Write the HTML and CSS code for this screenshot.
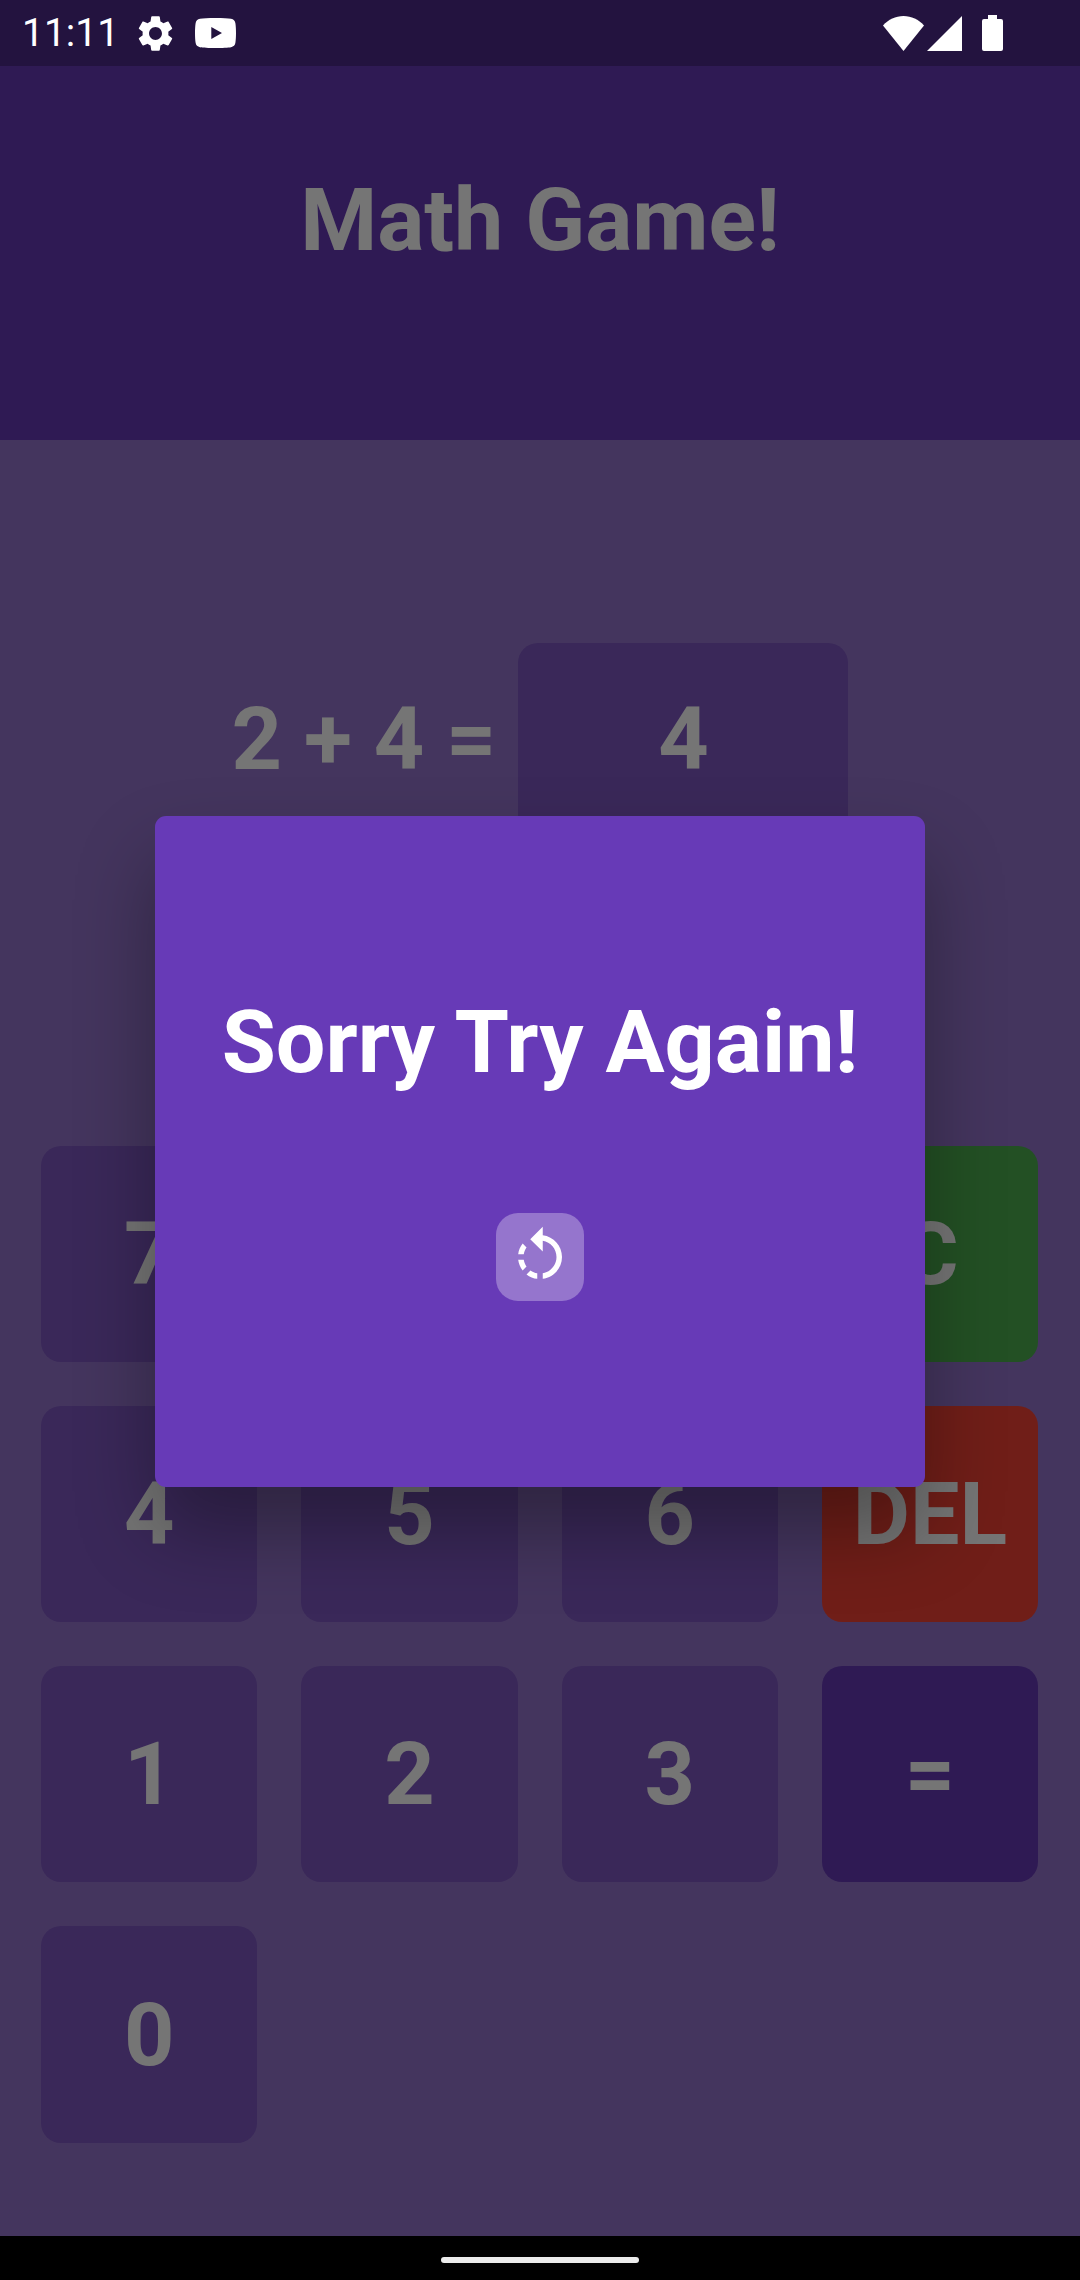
FILE: index.html
```html
<!DOCTYPE html>
<html lang="en">
<head>
  <meta charset="utf-8">
  <meta name="viewport" content="width=device-width, initial-scale=1">
  <title>Math Game!</title>
  <link rel="stylesheet" href="styles.css">
</head>
<body>
  <div class="phone">
    <div class="screen">
      <header class="header">
        <h1 class="title">Math Game!</h1>
      </header>

      <main class="game">
        <section class="question">
          <span class="question-text">2 + 4 = </span>
          <output class="answer">4</output>
        </section>

        <section class="keypad">
          <button class="key" type="button">7</button>
          <button class="key" type="button">8</button>
          <button class="key" type="button">9</button>
          <button class="key key-clear" type="button">C</button>
          <button class="key" type="button">4</button>
          <button class="key" type="button">5</button>
          <button class="key" type="button">6</button>
          <button class="key key-delete" type="button">DEL</button>
          <button class="key" type="button">1</button>
          <button class="key" type="button">2</button>
          <button class="key" type="button">3</button>
          <button class="key key-equals" type="button">=</button>
          <button class="key" type="button">0</button>
        </section>
      </main>

      <div class="scrim">
        <div class="dialog" role="dialog" aria-modal="true" aria-labelledby="dialog-title">
          <h2 class="dialog-title" id="dialog-title">Sorry Try Again!</h2>
          <button class="retry" type="button" aria-label="Try again">
            <svg class="retry-icon" viewBox="0 0 24 24" aria-hidden="true">
              <path d="M7.11 8.53L5.7 7.11C4.8 8.27 4.24 9.61 4.07 11h2.02c.14-.87.49-1.72 1.02-2.47zM6.09 13H4.07c.17 1.39.72 2.73 1.62 3.89l1.41-1.42c-.52-.75-.87-1.59-1.01-2.47zm1.01 5.32c1.16.9 2.51 1.44 3.9 1.61V17.9c-.87-.15-1.71-.49-2.46-1.03L7.1 18.32zM13 4.07V1L8.45 5.55 13 10V6.09c2.84.48 5 2.94 5 5.91s-2.16 5.43-5 5.91v2.02c3.95-.49 7-3.85 7-7.93s-3.05-7.44-7-7.93z"/>
            </svg>
          </button>
        </div>
      </div>

      <div class="status-bar">
        <div class="status-left">
          <span class="clock">11:11</span>
          <svg class="icon-gear" viewBox="0 0 24 24" aria-hidden="true">
            <path d="M19.14 12.94c.04-.3.06-.61.06-.94 0-.32-.02-.64-.07-.94l2.03-1.58c.18-.14.23-.41.12-.61l-1.92-3.32c-.12-.22-.37-.29-.59-.22l-2.39.96c-.5-.38-1.03-.7-1.62-.94L14.4 2.81c-.04-.24-.24-.41-.48-.41h-3.84c-.24 0-.43.17-.47.41L9.25 5.35c-.59.24-1.13.57-1.62.94L5.24 5.33c-.22-.08-.47 0-.59.22L2.74 8.87c-.12.21-.08.47.12.61l2.03 1.58c-.05.3-.09.63-.09.94s.02.64.07.94l-2.03 1.58c-.18.14-.23.41-.12.61l1.92 3.32c.12.22.37.29.59.22l2.39-.96c.5.38 1.03.7 1.62.94l.36 2.54c.05.24.24.41.48.41h3.84c.24 0 .44-.17.47-.41l.36-2.54c.59-.24 1.13-.56 1.62-.94l2.39.96c.22.08.47 0 .59-.22l1.92-3.32c.12-.22.07-.47-.12-.61l-2.01-1.58zM12 15.6c-1.98 0-3.6-1.62-3.6-3.6s1.62-3.6 3.6-3.6 3.6 1.62 3.6 3.6-1.62 3.6-3.6 3.6z"/>
          </svg>
          <svg class="icon-video" viewBox="0 0 41 30" aria-hidden="true">
            <path fill-rule="evenodd" d="M20.500 0C28 0 33 .3 36 .8 38.600 1.300 40 2.800 40.400 5.200 41.200 10 41.200 20 40.400 24.800 40 27.200 38.600 28.700 36 29.200 31 30.200 10 30.200 5 29.200 2.400 28.700 1 27.200 .6 24.800-.2 20-.2 10 .6 5.200 1 2.800 2.400 1.300 5 .8 8 .3 13 0 20.500 0ZM16.300 9v12L27 15Z"/>
          </svg>
        </div>
        <div class="status-right">
          <svg class="icon-wifi" viewBox="0 0 41 35" aria-hidden="true">
            <path d="M20.500 35 0 9.500C5.500 3.500 12.500 0 20.500 0S35.500 3.500 41 9.500Z"/>
          </svg>
          <svg class="icon-signal" viewBox="0 0 35 35" aria-hidden="true">
            <path d="M35 0v35H0Z"/>
          </svg>
          <svg class="icon-battery" viewBox="0 0 21 36" aria-hidden="true">
            <path d="M6 0h9v4h4a2 2 0 0 1 2 2v28a2 2 0 0 1-2 2H2a2 2 0 0 1-2-2V6a2 2 0 0 1 2-2h4Z"/>
          </svg>
        </div>
      </div>
    </div>

    <div class="nav-bar">
      <div class="nav-pill"></div>
    </div>
  </div>
</body>
</html>
```
FILE: styles.css
```css
:root {
  --purple: #673ab7;
  --purple-mid: #7e57c2;
  --purple-light: #9575cd;
  --green: #4caf50;
  --red: #f44336;
  --status-height: 66px;
}

* {
  box-sizing: border-box;
}

body {
  margin: 0;
  background: #000;
  color: #fff;
  font-family: Roboto, "Noto Sans", sans-serif;
}

button {
  border: 0;
  padding: 0;
  color: inherit;
  font: inherit;
}

svg {
  display: block;
  fill: #fff;
}

.phone {
  display: flex;
  flex-direction: column;
  min-height: 100vh;
}

.screen {
  position: relative;
  display: flex;
  flex: 1;
  flex-direction: column;
  background: var(--purple-light);
}

.title,
.question,
.key,
.dialog-title {
  margin: 0;
  font-size: 88px;
  font-weight: 700;
  line-height: 104px;
}

/* Header */
.header {
  display: flex;
  align-items: center;
  justify-content: center;
  min-height: 440px;
  background: var(--purple);
}

/* Game */
.game {
  display: grid;
  flex: 1;
  grid-template-rows: 1fr 2fr;
}

.question {
  display: flex;
  align-items: center;
  justify-content: center;
}

.question-text {
  white-space: pre;
}

.answer {
  display: flex;
  align-items: center;
  justify-content: center;
  width: 330px;
  height: 193px;
  border-radius: 20px;
  background: var(--purple-mid);
}

.keypad {
  display: grid;
  grid-template-columns: repeat(4, 1fr);
  align-content: start;
  gap: 44px;
  padding: 107px 42px 0 41px;
}

.key {
  aspect-ratio: 1;
  min-width: 0;
  border-radius: 20px;
  background: var(--purple-mid);
}

.key-clear {
  background: var(--green);
}

.key-delete {
  background: var(--red);
}

.key-equals {
  background: var(--purple);
}

/* Dialog */
.scrim {
  position: absolute;
  inset: 0;
  display: flex;
  align-items: center;
  justify-content: center;
  padding-top: var(--status-height);
  background: rgba(0, 0, 0, 0.54);
}

.dialog {
  display: flex;
  flex-direction: column;
  align-items: center;
  gap: 119px;
  width: min(770px, 100%);
  padding: 174px 0 186px;
  border-radius: 11px;
  background: var(--purple);
  box-shadow: 0 44px 80px rgba(0, 0, 0, 0.32);
}

.retry {
  display: grid;
  place-items: center;
  width: 88px;
  height: 88px;
  border-radius: 22px;
  background: var(--purple-light);
}

.retry-icon {
  width: 66px;
  height: 66px;
}

/* Status bar */
.status-bar {
  position: absolute;
  inset: 0 0 auto;
  display: flex;
  align-items: center;
  justify-content: space-between;
  height: var(--status-height);
  padding: 0 77px 0 22px;
  background: rgba(0, 0, 0, 0.25);
}

.status-left,
.status-right {
  display: flex;
  align-items: center;
}

.clock {
  font-size: 39px;
  line-height: 46px;
}

.icon-gear {
  width: 43px;
  height: 43px;
  margin: 0 18px 0 15px;
}

.icon-video {
  width: 41px;
  height: 30px;
}

.icon-wifi {
  width: 41px;
  height: 35px;
}

.icon-signal {
  width: 35px;
  height: 35px;
  margin: 0 20px 0 3px;
}

.icon-battery {
  width: 21px;
  height: 36px;
}

/* Navigation bar */
.nav-bar {
  display: flex;
  justify-content: center;
  padding: 21px 0 17px;
  background: #000;
}

.nav-pill {
  width: 198px;
  height: 6px;
  border-radius: 3px;
  background: #ececec;
}
```
